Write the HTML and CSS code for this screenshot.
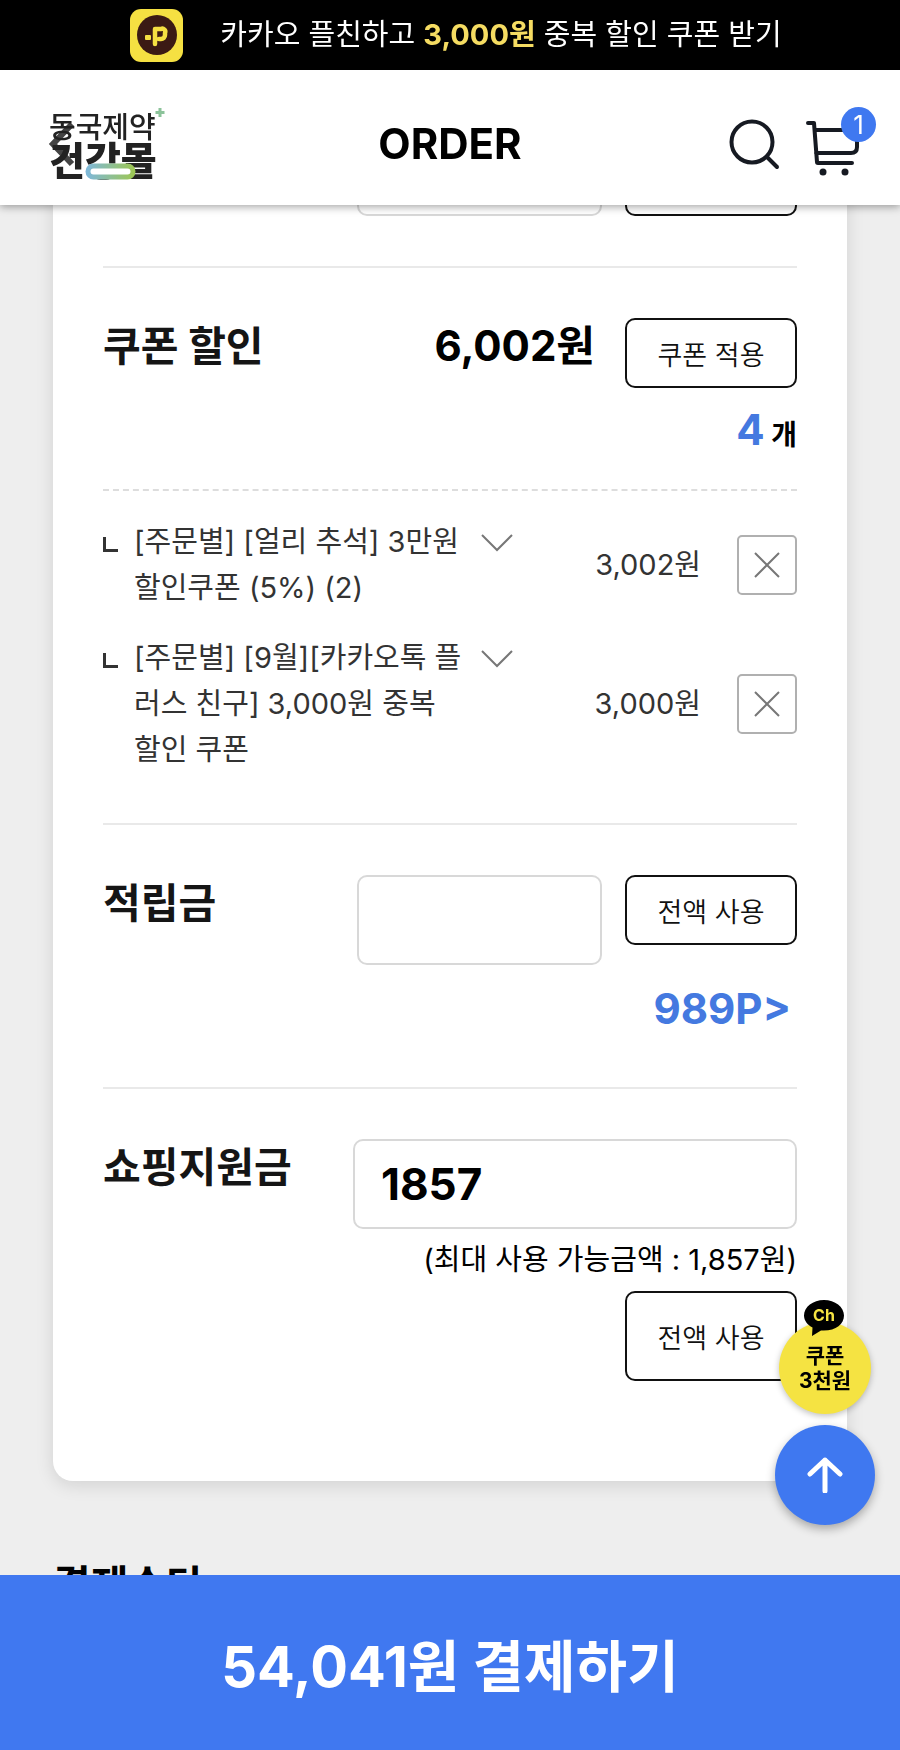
FILE: index.html
```html
<!DOCTYPE html>
<html lang="ko">
<head>
    <meta charset="UTF-8">
    <meta name="viewport" content="width=device-width, initial-scale=1.0">
    <title>ORDER</title>
    <link rel="stylesheet" href="styles.css">
</head>
<body>

    <header class="header">
        <a href="#" class="banner">
            <svg class="banner-icon" viewBox="0 0 53 53" aria-hidden="true">
                <rect width="53" height="53" rx="11" fill="#f5e042"/>
                <circle cx="27" cy="26" r="20" fill="#3b1a14"/>
                <rect x="15" y="26" width="6" height="5" rx="1" fill="#f5e042"/>
                <path d="M25 35V20h6a3 3 0 0 1 4 4v2a4 4 0 0 1-4 4h-2" fill="none" stroke="#f5e042" stroke-width="4.500" stroke-linecap="round" stroke-linejoin="round"/>
            </svg>
            <span>카카오 플친하고 <strong>3,000원</strong> 중복 할인 쿠폰 받기</span>
        </a>

        <nav class="nav">
            <a href="#" class="logo" aria-label="동국제약 건강몰">
                <svg width="120" height="72" viewBox="0 0 120 72">
                    <defs>
                        <linearGradient id="pill" x1="0" x2="1">
                            <stop offset="0" stop-color="#7fb8d6"/>
                            <stop offset="1" stop-color="#9cc656"/>
                        </linearGradient>
                    </defs>
                    <text class="logo-top" x="-1" y="30">동국제약</text>
                    <text class="logo-main" x="-1" y="67">건강몰</text>
                    <path d="M110 0v9M105.500 4.500h9" stroke="#8cc39a" stroke-width="3"/>
                    <rect x="38" y="58" width="45" height="11" rx="5.500" fill="#fff" stroke="url(#pill)" stroke-width="5"/>
                    <path class="logo-back" d="M22 16L3 36l19 20"/>
                </svg>
            </a>
            <h1 class="title">ORDER</h1>
            <div class="tools">
                <button type="button" class="icon-button" aria-label="검색">
                    <svg width="52" height="52" viewBox="0 0 52 52">
                        <circle cx="24" cy="24" r="20.500"/>
                        <path d="M39 39l10 10"/>
                    </svg>
                </button>
                <a href="#" class="cart" aria-label="장바구니">
                    <svg width="60" height="58" viewBox="0 0 60 58">
                        <path d="M2 4h6l3 39q0 1 1 1h34M9 11h42v17q0 6-6 6H10"/>
                        <circle cx="17" cy="53" r="3.500"/>
                        <circle cx="39" cy="53" r="3.500"/>
                    </svg>
                    <span class="badge">1</span>
                </a>
            </div>
        </nav>
    </header>

    <main class="content">
        <form class="card">
            <section class="section row">
                <span class="label"></span>
                <input type="text" class="box point-box" aria-label="할인">
                <button type="button" class="outline-button tall"></button>
            </section>

            <section class="section">
                <div class="row">
                    <h2 class="label">쿠폰 할인</h2>
                    <strong class="total">6,002원</strong>
                    <button type="button" class="outline-button">쿠폰 적용</button>
                </div>
                <p class="count"><strong>4</strong> 개</p>
                <ul class="coupons">
                    <li class="coupon">
                        <i class="branch"></i>
                        <span class="coupon-name">[주문별] [얼리 추석] 3만원 할인쿠폰 (5%) (2)</span>
                        <svg class="arrow" viewBox="0 0 32 18"><path d="M1 1l15 15L31 1"/></svg>
                        <span class="coupon-price">3,002원</span>
                        <button type="button" class="remove" aria-label="삭제">
                            <svg width="26" height="26" viewBox="0 0 26 26"><path d="M1 1l24 24M25 1L1 25"/></svg>
                        </button>
                    </li>
                    <li class="coupon">
                        <i class="branch"></i>
                        <span class="coupon-name">[주문별] [9월][카카오톡 플러스 친구] 3,000원 중복 할인 쿠폰</span>
                        <svg class="arrow" viewBox="0 0 32 18"><path d="M1 1l15 15L31 1"/></svg>
                        <span class="coupon-price">3,000원</span>
                        <button type="button" class="remove" aria-label="삭제">
                            <svg width="26" height="26" viewBox="0 0 26 26"><path d="M1 1l24 24M25 1L1 25"/></svg>
                        </button>
                    </li>
                </ul>
            </section>

            <section class="section points">
                <div class="row">
                    <label class="label" for="point">적립금</label>
                    <input type="text" id="point" class="box point-box">
                    <button type="button" class="outline-button">전액 사용</button>
                </div>
                <a href="#" class="point-link">989P&gt;</a>
            </section>

            <section class="section support">
                <div class="row">
                    <label class="label" for="support">쇼핑지원금</label>
                    <input type="text" id="support" class="box support-box" value="1857">
                </div>
                <p class="limit">(최대 사용 가능금액 : 1,857원)</p>
                <button type="button" class="outline-button tall">전액 사용</button>
            </section>
        </form>

        <h2 class="payment-title">결제수단</h2>
    </main>

    <div class="floating">
        <a href="#" class="coupon-float">
            <span>쿠폰<br>3천원</span>
            <svg class="bubble" width="40" height="36" viewBox="0 0 40 36">
                <path d="M20 0C9 0 0 7 0 15.500c0 5 3.500 9.500 8.500 12L8 36l9-5.500c14 1 23-6 23-15C40 7 31 0 20 0z"/>
                <text x="20" y="21" text-anchor="middle">Ch</text>
            </svg>
        </a>
        <button type="button" class="top-button" aria-label="맨 위로">
            <svg width="36" height="36" viewBox="0 0 36 36"><path d="M18 34V3M3 17L18 3l15 14"/></svg>
        </button>
    </div>

    <button type="button" class="pay-button">54,041원 결제하기</button>

</body>
</html>
```
FILE: styles.css
```css
* {
    box-sizing: border-box;
}

body {
    margin: 0;
    background: #eeeeee;
    color: #000000;
    font-family: Inter, "Noto Sans CJK KR", sans-serif;
    font-size: 29px;
    line-height: 46px;
}

h1, h2, p, ul {
    margin: 0;
    padding: 0;
}

a {
    color: inherit;
    text-decoration: none;
}

button, input {
    font-family: inherit;
    color: inherit;
}

button {
    padding: 0;
    cursor: pointer;
}

strong {
    font-weight: 700;
}

/* Header */
.header {
    position: fixed;
    top: 0;
    left: 0;
    right: 0;
    z-index: 10;
    background: #ffffff;
    box-shadow: 0 2px 8px rgba(0, 0, 0, 0.35);
}

.banner {
    display: flex;
    align-items: center;
    justify-content: center;
    gap: 37px;
    height: 70px;
    padding-left: 12px;
    background: #000000;
    color: #ffffff;
}

.banner strong {
    color: #f5dc62;
}

.banner-icon {
    width: 53px;
    height: 53px;
}

.nav {
    display: grid;
    grid-template-columns: 1fr auto 1fr;
    align-items: center;
    height: 135px;
    padding: 12px 24px 0;
}

.logo {
    padding-left: 26px;
}

.logo svg {
    display: block;
    overflow: visible;
}

.logo text {
    font-family: "Noto Sans CJK KR", sans-serif;
    fill: #222222;
}

.logo .logo-top {
    font-size: 29px;
    font-weight: 500;
}

.logo .logo-main {
    font-size: 39px;
    font-weight: 900;
}

.logo-back {
    fill: none;
    stroke: #222222;
    stroke-width: 6;
    opacity: 0.85;
}

.title {
    font-size: 42px;
    font-weight: 700;
}

.tools {
    display: flex;
    justify-content: flex-end;
    align-items: center;
    gap: 26px;
}

.tools svg {
    display: block;
    fill: none;
    stroke: #161a22;
    stroke-width: 4;
    stroke-linecap: round;
    stroke-linejoin: round;
}

.cart circle {
    fill: #161a22;
    stroke: none;
}

.icon-button {
    border: none;
    background: none;
}

.cart {
    position: relative;
    padding: 8px 10px 0 0;
}

.badge {
    position: absolute;
    top: -4px;
    right: 0;
    width: 35px;
    height: 35px;
    border-radius: 50%;
    background: #3f78f0;
    color: #ffffff;
    font-size: 26px;
    line-height: 35px;
    text-align: center;
}

/* Order card */
.content {
    padding: 76px 53px 100px;
}

.card {
    padding: 0 50px 50px;
    border-radius: 20px;
    background: #ffffff;
    box-shadow: 0 4px 18px rgba(0, 0, 0, 0.12);
}

.section {
    padding: 50px 0;
}

.section + .section {
    border-top: 2px solid #e9e9e9;
}

.row {
    display: flex;
    align-items: flex-start;
}

.label {
    flex: 1;
    color: #151515;
    font-size: 41px;
    font-weight: 700;
    line-height: 56px;
}

.total {
    margin-right: 30px;
    font-size: 42px;
    line-height: 56px;
}

.outline-button {
    width: 172px;
    height: 70px;
    border: 2px solid #111111;
    border-radius: 10px;
    background: #ffffff;
    color: #111111;
    font-size: 27px;
    font-weight: 350;
}

.outline-button.tall {
    height: 90px;
}

.box {
    height: 90px;
    padding: 0 26px;
    border: 2px solid #d8d8d8;
    border-radius: 10px;
    background: #ffffff;
    font-size: 44px;
    font-weight: 700;
}

.point-box {
    width: 245px;
    margin-right: 23px;
}

.support-box {
    width: 444px;
}

.count {
    padding: 14px 0 26px;
    border-bottom: 2px dashed #dddddd;
    font-size: 28px;
    font-weight: 700;
    line-height: 56px;
    text-align: right;
}

.count strong {
    color: #4479e0;
    font-size: 42px;
}

.coupons {
    display: flex;
    flex-direction: column;
    gap: 24px;
    padding-top: 28px;
    list-style: none;
}

.coupon {
    display: flex;
    align-items: center;
    color: #333333;
}

.branch {
    align-self: flex-start;
    width: 15px;
    height: 15px;
    margin: 18px 16px 0 0;
    border-left: 3px solid #333333;
    border-bottom: 3px solid #333333;
}

.coupon-name {
    width: 332px;
}

.arrow {
    align-self: flex-start;
    width: 32px;
    height: 18px;
    margin: 15px auto 0 15px;
    fill: none;
    stroke: #777777;
    stroke-width: 2;
}

.coupon-price {
    margin-right: 36px;
}

.remove {
    display: flex;
    align-items: center;
    justify-content: center;
    width: 60px;
    height: 60px;
    border: 2px solid #b0b0b0;
    border-radius: 5px;
    background: #ffffff;
}

.remove svg {
    stroke: #777777;
    stroke-width: 2;
}

.points,
.support {
    display: flex;
    flex-direction: column;
}

.point-link {
    align-self: flex-end;
    padding: 16px 6px 0;
    color: #4479e0;
    font-size: 42px;
    font-weight: 700;
    line-height: 56px;
}

.limit {
    padding: 8px 0;
    text-align: right;
}

.support .outline-button {
    align-self: flex-end;
}

.payment-title {
    padding-top: 76px;
    font-size: 41px;
    line-height: 56px;
}

/* Floating buttons */
.floating {
    position: fixed;
    right: 25px;
    bottom: 225px;
    z-index: 5;
    display: flex;
    flex-direction: column;
    align-items: center;
    gap: 11px;
}

.coupon-float {
    position: relative;
    display: flex;
    align-items: center;
    justify-content: center;
    width: 92px;
    height: 92px;
    border-radius: 50%;
    background: #f5e342;
    box-shadow: 0 2px 6px rgba(0, 0, 0, 0.25);
    font-size: 21px;
    font-weight: 700;
    line-height: 25px;
    text-align: center;
}

.bubble {
    position: absolute;
    top: -22px;
    left: 25px;
}

.bubble text {
    fill: #f5e342;
    font-size: 16px;
}

.top-button {
    display: flex;
    align-items: center;
    justify-content: center;
    width: 100px;
    height: 100px;
    border: none;
    border-radius: 50%;
    background: #3f78f0;
    box-shadow: 0 4px 10px rgba(0, 0, 0, 0.3);
}

.top-button svg {
    fill: none;
    stroke: #ffffff;
    stroke-width: 5;
    stroke-linecap: round;
    stroke-linejoin: round;
}

.pay-button {
    position: fixed;
    left: 0;
    bottom: 0;
    z-index: 10;
    width: 100%;
    height: 175px;
    border: none;
    background: #4078f0;
    color: #ffffff;
    font-size: 56px;
    font-weight: 700;
}
```
